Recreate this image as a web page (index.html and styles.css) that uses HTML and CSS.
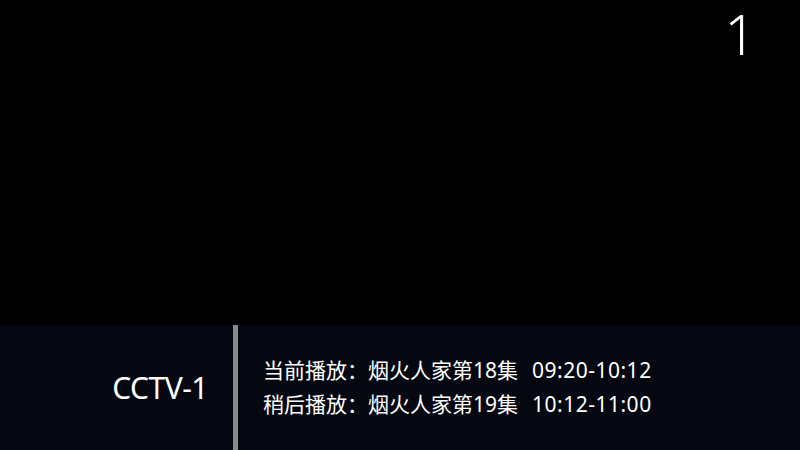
FILE: index.html
```html
<!DOCTYPE html>
<html lang="zh-CN">
<head>
<meta charset="utf-8">
<link rel="stylesheet" href="styles.css">
</head>
<body>
<div class="screen">
  <div class="video">
    <div class="chnum">1</div>
  </div>
  <div class="infobar">
    <div class="chname">CCTV-1</div>
    <div class="divider"></div>
    <div class="epg">
      <div class="line">当前播放：烟火人家第18集<span class="time">09:20-10:12</span></div>
      <div class="line">稍后播放：烟火人家第19集<span class="time">10:12-11:00</span></div>
    </div>
  </div>
</div>
</body>
</html>
```
FILE: styles.css
```css
html, body {
  margin: 0;
  padding: 0;
  background: #000;
}
.screen {
  width: 800px;
  height: 450px;
  display: flex;
  flex-direction: column;
  background: #000;
  color: #fff;
  font-family: "Noto Sans", "Noto Sans CJK SC", sans-serif;
}
.video {
  flex: 1;
  display: flex;
  justify-content: flex-end;
  align-items: flex-start;
}
.chnum {
  font-family: "Noto Sans", sans-serif;
  font-weight: 300;
  font-size: 55px;
  line-height: 66px;
  height: 66px;
  min-width: 40px;
  text-align: right;
  padding: 0 6px;
  margin-top: 1px;
  margin-right: 38px;
  white-space: nowrap;
}
.infobar {
  height: 125px;
  background: #050810;
  display: flex;
  align-items: stretch;
}
.chname {
  width: 208px;
  display: flex;
  align-items: center;
  justify-content: flex-end;
  padding-right: 25px;
  font-size: 30px;
  letter-spacing: -0.5px;
}
.divider {
  width: 5px;
  background: #8a8a8a;
}
.epg {
  flex: 1;
  display: flex;
  flex-direction: column;
  justify-content: center;
  gap: 4px;
  padding-left: 25px;
  font-size: 21px;
  line-height: 30px;
  padding-bottom: 2px;
}
.line {
  white-space: nowrap;
}
.time {
  margin-left: 14px;
  letter-spacing: 0.5px;
}
```
